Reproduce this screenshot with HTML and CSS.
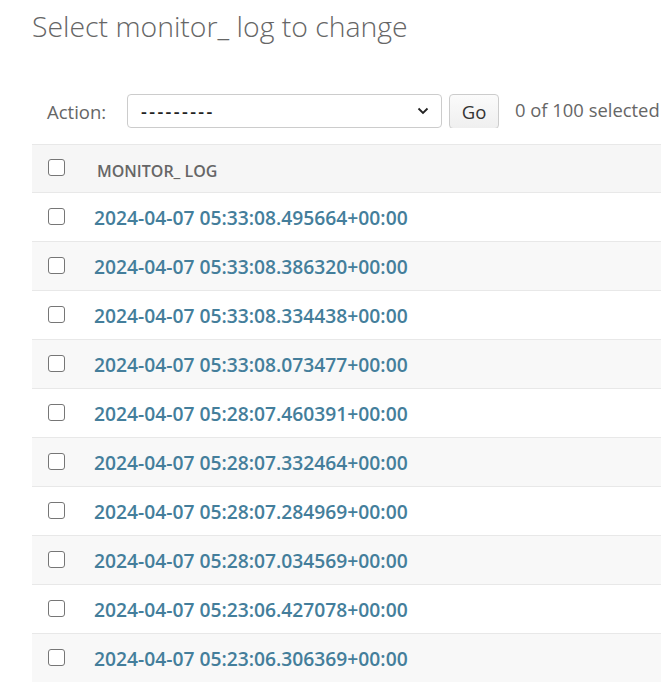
FILE: index.html
```html
<!DOCTYPE html>
<html>
<head>
<meta charset="utf-8">
<title>Select monitor_ log to change</title>
<link rel="stylesheet" href="styles.css">
</head>
<body>
<div class="content">
  <h1 class="title">Select monitor_ log to change</h1>
  <div class="actions">
    <label class="action-label">Action:</label>
    <div class="select">
      <span class="select-value">---------</span>
      <svg class="chevron" width="12" height="8" viewBox="0 0 12 8"><path d="M1.5 1.5 L6 6 L10.5 1.5" fill="none" stroke="#222" stroke-width="1.8"/></svg>
    </div>
    <button class="go">Go</button>
    <span class="counter">0 of 100 selected</span>
  </div>
  <table class="results">
    <thead>
      <tr>
        <th class="cb-col"><span class="cb"></span></th>
        <th class="name-col">MONITOR_ LOG</th>
      </tr>
    </thead>
    <tbody>
      <tr><td class="cb-col"><span class="cb"></span></td><td><a href="#">2024-04-07 05:33:08.495664+00:00</a></td></tr>
      <tr><td class="cb-col"><span class="cb"></span></td><td><a href="#">2024-04-07 05:33:08.386320+00:00</a></td></tr>
      <tr><td class="cb-col"><span class="cb"></span></td><td><a href="#">2024-04-07 05:33:08.334438+00:00</a></td></tr>
      <tr><td class="cb-col"><span class="cb"></span></td><td><a href="#">2024-04-07 05:33:08.073477+00:00</a></td></tr>
      <tr><td class="cb-col"><span class="cb"></span></td><td><a href="#">2024-04-07 05:28:07.460391+00:00</a></td></tr>
      <tr><td class="cb-col"><span class="cb"></span></td><td><a href="#">2024-04-07 05:28:07.332464+00:00</a></td></tr>
      <tr><td class="cb-col"><span class="cb"></span></td><td><a href="#">2024-04-07 05:28:07.284969+00:00</a></td></tr>
      <tr><td class="cb-col"><span class="cb"></span></td><td><a href="#">2024-04-07 05:28:07.034569+00:00</a></td></tr>
      <tr><td class="cb-col"><span class="cb"></span></td><td><a href="#">2024-04-07 05:23:06.427078+00:00</a></td></tr>
      <tr><td class="cb-col"><span class="cb"></span></td><td><a href="#">2024-04-07 05:23:06.306369+00:00</a></td></tr>
    </tbody>
  </table>
</div>
</body>
</html>
```
FILE: styles.css
```css
html, body {
  margin: 0;
  padding: 0;
  background: #fff;
  overflow: hidden;
}
body {
  font-family: "Open Sans", "Noto Sans", sans-serif;
  color: #333;
}
.content {
  padding: 7px 0 0 32px;
}
.title {
  margin: 0;
  font-size: 28.4px;
  font-weight: 300;
  color: #666;
  line-height: 38px;
  height: 38px;
}
.actions {
  display: flex;
  align-items: center;
  margin-top: 49px;
  height: 34px;
  padding-left: 15px;
  white-space: nowrap;
  overflow: hidden;
}
.action-label {
  font-size: 18.5px;
  color: #666;
  width: 80px;
  flex: none;
}
.select {
  flex: none;
  width: 315px;
  height: 34px;
  box-sizing: border-box;
  border: 1px solid #ccc;
  border-radius: 4px;
  display: flex;
  align-items: center;
  justify-content: space-between;
  padding: 0 12px 0 13px;
  font-size: 18px;
  color: #333;
}
.select-value {
  letter-spacing: 2.4px;
  font-weight: 600;
  color: #222;
}
.chevron {
  display: block;
}
.go {
  flex: none;
  margin-left: 7px;
  width: 50px;
  height: 35px;
  box-sizing: border-box;
  border: 1px solid #ccc;
  border-radius: 4px;
  background: linear-gradient(#fbfbfb, #efefef);
  font-family: inherit;
  font-size: 18.5px;
  color: #333;
  padding: 0;
}
.counter {
  margin-left: 16px;
  font-size: 18.4px;
  color: #666;
  margin-top: -4px;
}
.results {
  margin-top: 16px;
  width: 100%;
  border-collapse: collapse;
}
.results th, .results td {
  border-top: 1px solid #e8e8e8;
  border-bottom: 1px solid #e8e8e8;
  text-align: left;
  vertical-align: middle;
  padding: 0;
}
.results thead th {
  background: #f6f6f6;
  height: 47px;
  font-size: 16px;
  line-height: 20px;
  font-weight: 600;
  color: #666;
}
.results thead th.name-col {
  padding: 4px 0 0 3px;
  height: 43px;
}
.results td {
  height: 48px;
}
.results tbody tr:nth-child(even) td {
  background: #f8f8f8;
}
.cb-col {
  width: 62px;
  padding-left: 16px !important;
  box-sizing: border-box;
}
.cb {
  display: block;
  width: 17px;
  height: 17px;
  box-sizing: border-box;
  border: 1.5px solid #767676;
  border-radius: 3px;
  background: #fff;
  margin-top: -2px;
}
.results a {
  color: #447e9b;
  font-size: 19.25px;
  font-weight: 600;
  text-decoration: none;
}
```
